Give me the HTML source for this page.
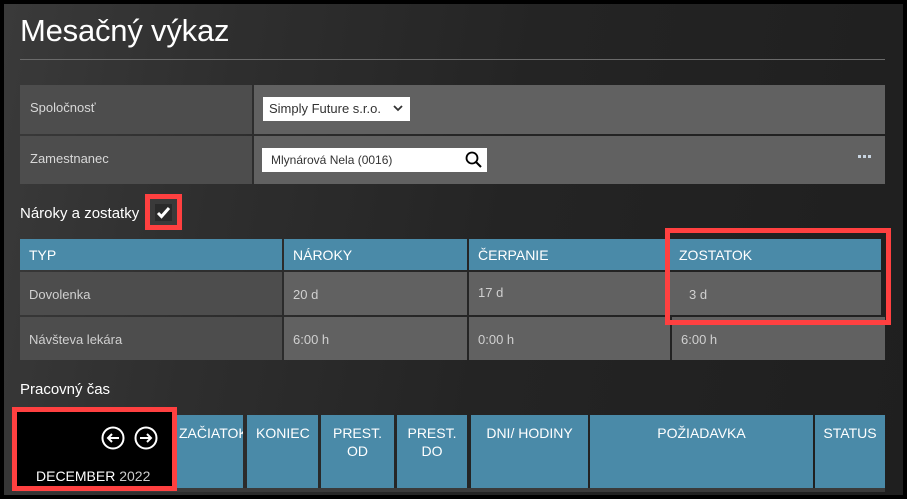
<!DOCTYPE html>
<html><head><meta charset="utf-8"><style>
*{margin:0;padding:0;box-sizing:border-box}
body{width:907px;height:499px;background:#000;overflow:hidden;font-family:"Liberation Sans","DejaVu Sans",sans-serif;position:relative}
.bg{position:absolute;left:4px;top:4px;width:899px;height:491px;background:linear-gradient(100deg,#3a3a3a 0%,#2e2e2e 25%,#242424 55%,#1f1f1f 100%);overflow:hidden}
.a{position:absolute}
.t{color:#fff;font-size:31px;left:20px;top:13px;letter-spacing:-0.2px}
.lab{background:#4d4d4d;color:#d8d8d8;font-size:13px;padding:15px 0 0 10px}
.val{background:#616161}
.hd{background:#4a8aa8;color:#fff;font-size:14px;padding:8px 0 0 9px}
.c1{background:#4d4d4d;color:#d0d0d0;font-size:13px;padding:15px 0 0 9px}
.c2{background:#616161;color:#d0d0d0;font-size:13px;padding:15px 0 0 9px}
.bh{background:#4a8aa8;color:#fff;font-size:14px;text-align:center;padding-top:9px;line-height:18px}
.red{border:5px solid #ff4040}
</style></head><body>
<div class="bg">
</div>
<div class="a t">Mesačný výkaz</div>
<div class="a" style="left:20px;top:59px;width:865px;height:1px;background:#6a6a6a"></div>

<div class="a lab" style="left:20px;top:85px;width:232px;height:49px">Spoločnosť</div>
<div class="a val" style="left:254px;top:85px;width:631px;height:49px"></div>
<div class="a lab" style="left:20px;top:136px;width:232px;height:48px">Zamestnanec</div>
<div class="a val" style="left:254px;top:136px;width:631px;height:48px"></div>
<div class="a" style="left:263px;top:97px;width:147px;height:24px;background:#fff;font-size:13px;color:#333;padding:4px 0 0 6px">Simply Future s.r.o.
<svg style="position:absolute;right:7px;top:8px" width="10" height="7" viewBox="0 0 10 7"><path d="M1 1l4 4 4-4" fill="none" stroke="#333" stroke-width="1.8"/></svg></div>
<div class="a" style="left:262px;top:148px;width:225px;height:24px;background:#fff;font-size:12px;color:#333;padding:5px 0 0 9px">Mlynárová Nela (0016)
<svg style="position:absolute;right:4px;top:3px" width="18" height="18" viewBox="0 0 18 18"><circle cx="7" cy="7" r="5.5" fill="none" stroke="#000" stroke-width="1.8"/><path d="M11 11l5 5" stroke="#000" stroke-width="2"/></svg></div>
<div class="a" style="left:858px;top:155px;width:14px;height:3px;background:repeating-linear-gradient(90deg,#c8d4e0 0 3px,transparent 3px 5px)"></div>

<div class="a" style="left:20px;top:205px;color:#fff;font-size:15px">Nároky a zostatky</div>
<div class="a red" style="left:145px;top:194px;width:37px;height:36px;background:#3a3a3a"></div>
<div class="a" style="left:155px;top:204px;width:17px;height:17px;background:#2a2a2a"></div>
<svg class="a" style="left:155px;top:204px" width="17" height="17" viewBox="0 0 17 17"><path d="M3 9l3.5 3.5L14 4" fill="none" stroke="#fff" stroke-width="3"/></svg>

<div class="a hd" style="left:20px;top:239px;width:262px;height:31px">TYP</div>
<div class="a hd" style="left:284px;top:239px;width:183px;height:31px">NÁROKY</div>
<div class="a hd" style="left:469px;top:239px;width:201px;height:31px">ČERPANIE</div>
<div class="a hd" style="left:670px;top:239px;width:211px;height:31px">ZOSTATOK</div>
<div class="a c1" style="left:20px;top:272px;width:262px;height:43px">Dovolenka</div>
<div class="a c2" style="left:284px;top:272px;width:183px;height:43px">20 d</div>
<div class="a c2" style="left:469px;top:272px;width:201px;height:43px;padding-top:13px">17 d</div>
<div class="a c2" style="left:670px;top:272px;width:211px;height:43px;padding-left:19px">3 d</div>
<div class="a c1" style="left:20px;top:317px;width:262px;height:43px">Návšteva lekára</div>
<div class="a c2" style="left:284px;top:317px;width:183px;height:43px">6:00 h</div>
<div class="a c2" style="left:469px;top:317px;width:201px;height:43px">0:00 h</div>
<div class="a c2" style="left:672px;top:317px;width:213px;height:43px">6:00 h</div>
<div class="a red" style="left:665px;top:228px;width:226px;height:97px"></div>

<div class="a" style="left:20px;top:381px;color:#fff;font-size:15px">Pracovný čas</div>
<div class="a" style="left:16px;top:488px;width:869px;height:4px;background:#3a3a3a"></div>
<div class="a bh" style="left:177px;top:415px;width:66px;height:73px;text-align:left;padding-left:2px;overflow:hidden;white-space:nowrap">ZAČIATOK</div>
<div class="a bh" style="left:247px;top:415px;width:71px;height:73px;text-align:left;padding-left:9px">KONIEC</div>
<div class="a bh" style="left:321px;top:415px;width:73px;height:73px">PREST.<br>OD</div>
<div class="a bh" style="left:397px;top:415px;width:70px;height:73px">PREST.<br>DO</div>
<div class="a bh" style="left:471px;top:415px;width:117px;height:73px">DNI/ HODINY</div>
<div class="a bh" style="left:590px;top:415px;width:223px;height:73px">POŽIADAVKA</div>
<div class="a bh" style="left:815px;top:415px;width:70px;height:73px">STATUS</div>
<div class="a red" style="left:12px;top:407px;width:165px;height:84px;background:#000"></div>
<div class="a" style="left:101px;top:426px"><svg width="58" height="26" viewBox="0 0 58 26"><circle cx="12" cy="12" r="10.5" fill="none" stroke="#fff" stroke-width="2"/><path d="M18 12H7M11 8l-4 4 4 4" fill="none" stroke="#fff" stroke-width="2"/><circle cx="45" cy="12" r="10.5" fill="none" stroke="#fff" stroke-width="2"/><path d="M39 12h11M46 8l4 4-4 4" fill="none" stroke="#fff" stroke-width="2"/></svg></div>
<div class="a" style="left:36px;top:468px;color:#fff;font-size:14px">DECEMBER <span style="color:#ccc">2022</span></div>
</body></html>
